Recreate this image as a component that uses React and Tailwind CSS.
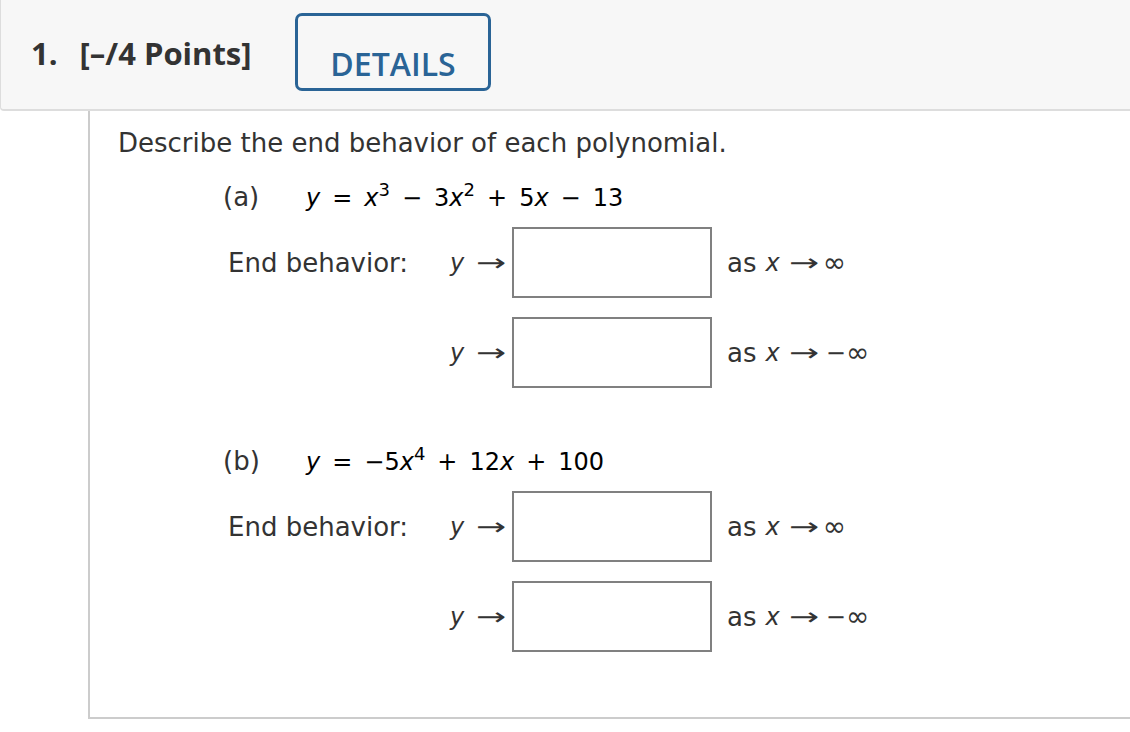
import React from 'react'

// WebAssign-style question card: header strip + framed question body.
const prose = "font-['DejaVu_Sans',Verdana,sans-serif]"

function Op({ children }) {
  return <span className="px-[12px]">{children}</span>
}

function Sup({ children }) {
  return <sup className="text-[18px] top-[-0.55em]">{children}</sup>
}

function Row({ label, neg, className = '' }) {
  return (
    <div className={`flex items-center ml-[110px] ${className}`}>
      <div className="w-[222px] text-[26px] leading-[32px] text-[#333]">{label}</div>
      <div className="w-[62px] pr-[6px] flex items-center text-[24px] leading-[32px] text-[#333]">
        <i>y</i>
        <span className="ml-auto inline-block scale-x-[1.5] origin-right">→</span>
      </div>
      <input
        type="text"
        className="w-[200px] h-[71px] border-2 border-[#808080] bg-white outline-none"
      />
      <div className="ml-[15px] flex items-center text-[#333] leading-[32px]">
        <span className="text-[26px]">as</span>
        <i className="ml-[9px] text-[24px]">x</i>
        <span className="ml-[9px] text-[24px] inline-block scale-x-[1.5] origin-left">→</span>
        {neg && <span className="ml-[17px] text-[24px]">−</span>}
        <span className={neg ? 'text-[28px]' : 'ml-[14px] text-[28px]'}>∞</span>
      </div>
    </div>
  )
}

export default function App() {
  return (
    <div className={`w-[1130px] h-[732px] bg-white overflow-hidden ${prose}`}>
      {/* Header */}
      <div className="h-[111px] bg-[#f7f7f7] border-l border-b-2 border-[#dddddd] rounded-bl-[4px] flex items-start pl-[30px] pt-[13px] font-['Open_Sans',sans-serif]">
        <div className="w-[264px] mt-[25px] flex text-[31px] leading-[30px] font-bold text-[#333]">
          <span>1.</span>
          <span className="ml-[22px]">[–/4 Points]</span>
        </div>
        <button className="w-[196px] h-[78px] border-[3px] border-[#2a6496] rounded-[7px] flex items-end justify-center pb-[9px] text-[32px] leading-[30px] font-semibold text-[#2a6496]">
          DETAILS
        </button>
      </div>

      {/* Question body */}
      <div className="ml-[88px] h-[608px] border-l-2 border-b-2 border-[#cccccc] pl-[28px] pt-[16px]">
        <p className="text-[26px] leading-[32px] text-[#333]">
          Describe the end behavior of each polynomial.
        </p>

        <div className="mt-[22px] ml-[105px] flex items-baseline h-[32px]">
          <span className="w-[83px] text-[26px] leading-[32px] text-[#333]">(a)</span>
          <span className="text-[24px] leading-[32px] text-black">
            <i>y</i>
            <Op>=</Op>
            <i>x</i>
            <Sup>3</Sup>
            <Op>−</Op>
            3<i>x</i>
            <Sup>2</Sup>
            <Op>+</Op>
            5<i>x</i>
            <Op>−</Op>
            13
          </span>
        </div>

        <Row label="End behavior:" className="mt-[14px]" />
        <Row label="" neg className="mt-[19px]" />

        <div className="mt-[57px] ml-[105px] flex items-baseline h-[32px]">
          <span className="w-[83px] text-[26px] leading-[32px] text-[#333]">(b)</span>
          <span className="text-[24px] leading-[32px] text-black">
            <i>y</i>
            <Op>=</Op>
            −5<i>x</i>
            <Sup>4</Sup>
            <Op>+</Op>
            12<i>x</i>
            <Op>+</Op>
            100
          </span>
        </div>

        <Row label="End behavior:" className="mt-[14px]" />
        <Row label="" neg className="mt-[19px]" />
      </div>
    </div>
  )
}
